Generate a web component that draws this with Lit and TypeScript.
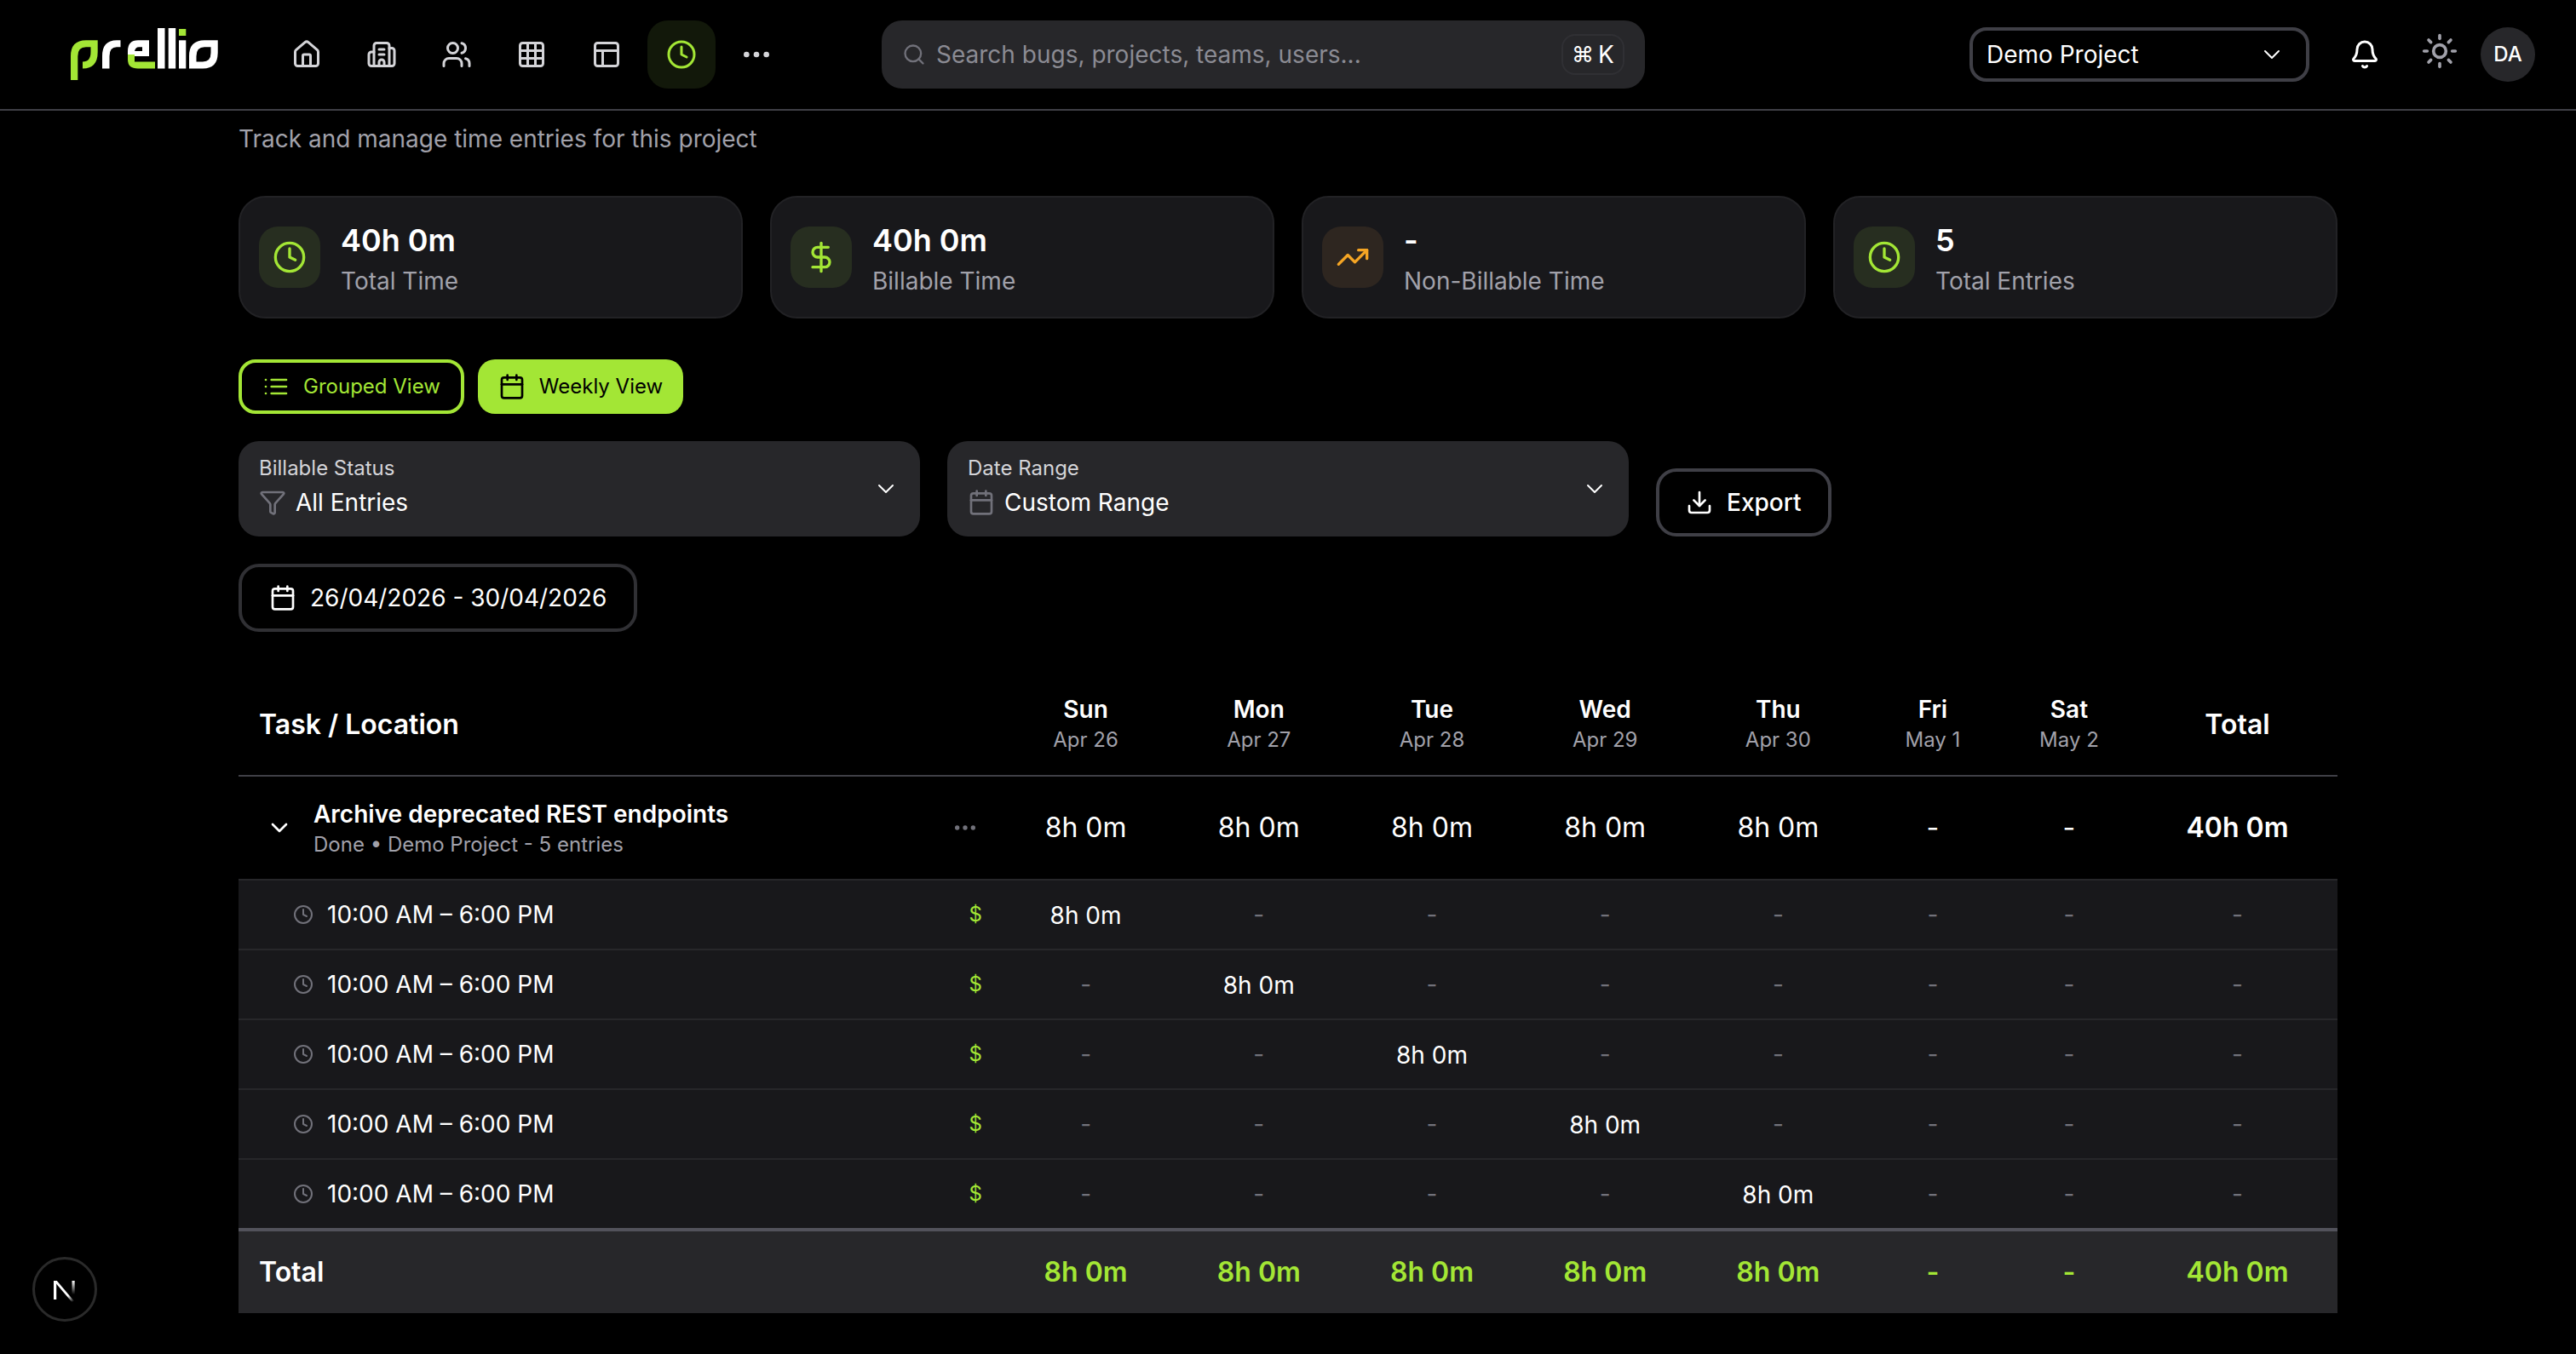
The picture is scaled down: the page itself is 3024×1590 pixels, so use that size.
import { LitElement, html, css, svg } from "lit";
import { customElement } from "lit/decorators.js";

const I: Record<string, any> = {
  house: svg`<path d="M15 21v-8a1 1 0 0 0-1-1h-4a1 1 0 0 0-1 1v8"/><path d="M3 10a2 2 0 0 1 .709-1.528l7-5.999a2 2 0 0 1 2.582 0l7 5.999A2 2 0 0 1 21 10v9a2 2 0 0 1-2 2H5a2 2 0 0 1-2-2z"/>`,
  building: svg`<path d="M10 12h4"/><path d="M10 8h4"/><path d="M14 21v-3a2 2 0 0 0-4 0v3"/><path d="M6 10H4a2 2 0 0 0-2 2v7a2 2 0 0 0 2 2h16a2 2 0 0 0 2-2V9a2 2 0 0 0-2-2h-2"/><path d="M6 21V5a2 2 0 0 1 2-2h8a2 2 0 0 1 2 2v16"/>`,
  users: svg`<path d="M16 21v-2a4 4 0 0 0-4-4H6a4 4 0 0 0-4 4v2"/><circle cx="9" cy="7" r="4"/><path d="M22 21v-2a4 4 0 0 0-3-3.87"/><path d="M16 3.13a4 4 0 0 1 0 7.75"/>`,
  grid: svg`<rect x="3" y="3" width="18" height="18" rx="2"/><path d="M3 9h18"/><path d="M3 15h18"/><path d="M9 3v18"/><path d="M15 3v18"/>`,
  panels: svg`<rect x="3" y="3" width="18" height="18" rx="2"/><path d="M3 9h18"/><path d="M9 21V9"/>`,
  clock: svg`<circle cx="12" cy="12" r="10"/><path d="M12 6v6l4 2"/>`,
  dots: svg`<circle cx="12" cy="12" r="1"/><circle cx="19" cy="12" r="1"/><circle cx="5" cy="12" r="1"/>`,
  search: svg`<path d="m21 21-4.34-4.34"/><circle cx="11" cy="11" r="8"/>`,
  chevron: svg`<path d="m6 9 6 6 6-6"/>`,
  bell: svg`<path d="M10.268 21a2 2 0 0 0 3.464 0"/><path d="M3.262 15.326A1 1 0 0 0 4 17h16a1 1 0 0 0 .74-1.673C19.41 13.956 18 12.499 18 8A6 6 0 0 0 6 8c0 4.499-1.411 5.956-2.738 7.326"/>`,
  sun: svg`<circle cx="12" cy="12" r="4"/><path d="M12 2v2"/><path d="M12 20v2"/><path d="m4.93 4.93 1.41 1.41"/><path d="m17.66 17.66 1.41 1.41"/><path d="M2 12h2"/><path d="M20 12h2"/><path d="m6.34 17.66-1.41 1.41"/><path d="m19.07 4.93-1.41 1.41"/>`,
  dollar: svg`<path d="M12 2v20"/><path d="M17 5H9.5a3.5 3.5 0 0 0 0 7h5a3.5 3.5 0 0 1 0 7H6"/>`,
  trend: svg`<path d="M16 7h6v6"/><path d="m22 7-8.5 8.5-5-5L2 17"/>`,
  list: svg`<path d="M3 12h.01"/><path d="M3 18h.01"/><path d="M3 6h.01"/><path d="M8 12h13"/><path d="M8 18h13"/><path d="M8 6h13"/>`,
  calendar: svg`<path d="M8 2v4"/><path d="M16 2v4"/><rect x="3" y="4" width="18" height="18" rx="2"/><path d="M3 10h18"/>`,
  funnel: svg`<path d="M10 20a1 1 0 0 0 .553.895l2 1A1 1 0 0 0 14 21v-7a2 2 0 0 1 .517-1.341L21.74 4.67A1 1 0 0 0 21 3H3a1 1 0 0 0-.742 1.67l7.225 7.989A2 2 0 0 1 10 14z"/>`,
  download: svg`<path d="M12 15V3"/><path d="M21 15v4a2 2 0 0 1-2 2H5a2 2 0 0 1-2-2v-4"/><path d="m7 10 5 5 5-5"/>`,
};

const icon = (name: string, size: number, sw = 2) =>
  html`<svg class="ic" width=${size} height=${size} viewBox="0 0 24 24" fill="none" stroke="currentColor" stroke-width=${sw} stroke-linecap="round" stroke-linejoin="round">${I[name]}</svg>`;

const logo = html`<svg class="logo" width="180" height="68" viewBox="80 30 180 68">
  <path fill="#a3e635" d="M83 94V66Q83 47.3 101 47.3H114.7V61Q114.7 80.5 97 80.5V72.5Q106.5 72.5 106.5 61V55.3H101Q91.3 55.3 91.3 66V94Z"/>
  <path fill="#fff" d="M120 80.5V66Q120 47.3 137 47.3H141.5V55.3H137Q128.5 55.3 128.5 66V80.5Z"/>
  <path fill="#fff" fill-rule="evenodd" d="M150 60Q150 47.3 162 47.3H175V66H150ZM158 60H167V55.3H163Q159 55.3 158 60Z"/>
  <path fill="#a3e635" d="M150 64H158V72.5H182V80.5H162Q150 80.5 150 70Z"/>
  <rect fill="#fff" x="185" y="33" width="8.5" height="47.5"/>
  <rect fill="#fff" x="197.7" y="33" width="8.5" height="47.5"/>
  <rect fill="#a3e635" x="210" y="34" width="8.3" height="8"/>
  <rect fill="#fff" x="210" y="47.3" width="8.3" height="33.2"/>
  <path fill="#fff" fill-rule="evenodd" d="M222 66Q222 47.3 240 47.3H255.7V62Q255.7 80.5 238 80.5H222ZM230.5 72.5H238Q247.5 72.5 247.5 62V55.3H240Q230.5 55.3 230.5 66Z"/>
</svg>`;

const nextMark = html`<svg width="40" height="40" viewBox="0 0 40 40" fill="none">
  <defs>
    <linearGradient id="nd" x1="10" y1="10" x2="31" y2="34" gradientUnits="userSpaceOnUse"><stop offset="0.7" stop-color="#fff"/><stop offset="1" stop-color="#fff" stop-opacity="0"/></linearGradient>
    <linearGradient id="nv" x1="30" y1="10" x2="30" y2="26" gradientUnits="userSpaceOnUse"><stop stop-color="#fff"/><stop offset="1" stop-color="#fff" stop-opacity="0"/></linearGradient>
  </defs>
  <rect x="7" y="10" width="3.2" height="22" fill="#fff"/>
  <path d="M7 10H10.8L31.5 34.5H28Z" fill="url(#nd)"/>
  <rect x="28.5" y="10" width="3.2" height="16" fill="url(#nv)"/>
</svg>`;

const NAV = ["house", "building", "users", "grid", "panels", "clock"];
const CARDS = [
  { v: "40h 0m", l: "Total Time", i: "clock", amber: false },
  { v: "40h 0m", l: "Billable Time", i: "dollar", amber: false },
  { v: "-", l: "Non-Billable Time", i: "trend", amber: true },
  { v: "5", l: "Total Entries", i: "clock", amber: false },
];
const DAYS = [
  ["Sun", "Apr 26"], ["Mon", "Apr 27"], ["Tue", "Apr 28"], ["Wed", "Apr 29"],
  ["Thu", "Apr 30"], ["Fri", "May 1"], ["Sat", "May 2"],
];
const TOTALS = ["8h 0m", "8h 0m", "8h 0m", "8h 0m", "8h 0m", "-", "-", "40h 0m"];

@customElement("app-root")
export class AppRoot extends LitElement {
  static styles = css`
    :host { display: block; height: 100vh; overflow: hidden; background: #000; color: #fff; font-family: Inter, "Liberation Sans", sans-serif; font-size: 28px; line-height: 40px; position: relative; }
    * { box-sizing: border-box; }
    .ic, .logo { display: block; flex: none; }

    header { height: 130px; border-bottom: 2px solid #3f3f46; display: flex; align-items: center; padding: 0 48px 0 80px; }
    .nav { display: flex; gap: 8px; margin-left: 60px; }
    .nav-btn { width: 80px; height: 80px; border-radius: 24px; display: flex; align-items: center; justify-content: center; color: #d4d4d8; }
    .nav-btn.on { background: #12180a; color: #a3e635; }
    .search { width: 896px; height: 80px; margin-left: 107px; border-radius: 24px; background: #27272a; display: flex; align-items: center; padding: 0 24px; color: #71717a; }
    .search span { margin-left: 12px; color: #8b8b93; flex: 1; }
    .kbd { width: 74px; height: 48px; border: 2px solid #303034; border-radius: 16px; color: #fff; display: flex; align-items: center; justify-content: center; font-size: 28px; gap: 5px; flex: none; }
    .kbd-sym { font-size: 26px; font-style: normal; }
    .right { margin-left: auto; display: flex; align-items: center; gap: 8px; }
    .project { width: 399px; height: 64px; border: 4px solid #3f3f46; border-radius: 20px; display: flex; align-items: center; justify-content: space-between; padding: 0 24px 0 16px; margin-right: 17px; }
    .ghost { width: 80px; height: 80px; display: flex; align-items: center; justify-content: center; }
    .sun { color: #a1a1aa; padding-bottom: 8px; }
    .avatar { width: 64px; height: 64px; border-radius: 50%; background: #27272a; display: flex; align-items: center; justify-content: center; font-size: 24px; font-weight: 500; }

    main { width: 2464px; margin: 0 auto; padding-top: 13px; }
    .sub { color: #a1a1aa; }
    .cards { display: grid; grid-template-columns: repeat(4, 1fr); gap: 32px; margin-top: 47px; }
    .card { height: 144px; border-radius: 32px; background: #18181b; border: 2px solid #222225; padding: 0 22px; display: flex; align-items: center; gap: 24px; }
    .card-ic { width: 72px; height: 72px; border-radius: 22px; background: #272e20; color: #a3e635; display: flex; align-items: center; justify-content: center; }
    .card-ic.amber { background: #2e2620; color: #f5a524; }
    .card-text { padding-top: 4px; }
    .val { font-size: 36px; line-height: 48px; font-weight: 600; }
    .lab { color: #a1a1aa; margin-top: 4px; }

    .views { display: flex; gap: 16px; margin-top: 48px; }
    .view { height: 64px; border-radius: 20px; border: 4px solid #a3e635; padding: 0 24px; display: flex; align-items: center; gap: 16px; color: #a3e635; font-size: 24px; font-weight: 400; }
    .view.on { background: #a3e635; color: #000; border: 0; }

    .filters { display: flex; align-items: flex-end; gap: 32px; margin-top: 32px; }
    .select { width: 800px; height: 112px; border-radius: 24px; background: #27272a; padding: 0 24px; display: flex; align-items: center; justify-content: space-between; }
    .s-text { padding-bottom: 4px; }
    .s-lab { font-size: 24px; line-height: 32px; color: #d4d4d8; }
    .s-val { display: flex; align-items: center; gap: 11px; margin-top: 4px; color: #71717a; }
    .s-val span { color: #fff; }
    .outline { height: 80px; border: 4px solid #3f3f46; border-radius: 24px; display: flex; align-items: center; gap: 16px; font-weight: 500; padding: 0 31px; white-space: nowrap; }
    .outline.date { width: 468px; border-color: #303034; margin-top: 32px; padding: 0 0 0 32px; font-weight: 400; }

    .table { margin-top: 48px; }
    .row { display: grid; grid-template-columns: 893px repeat(5, 203.2px) 160px 160px 1fr; align-items: center; text-align: center; }
    .first { text-align: left; display: flex; align-items: center; }
    .head { height: 122px; border-bottom: 2px solid #3f3f46; font-weight: 600; padding-top: 2px; }
    .head .first, .foot .first { padding-left: 24px; font-size: 32px; }
    .head .big { font-size: 32px; }
    .day { font-size: 28px; line-height: 36px; }
    .date-s { font-size: 24px; line-height: 36px; font-weight: 400; color: #a1a1aa; }
    .group { height: 122px; border-bottom: 2px solid #27272a; font-size: 32px; }
    .group .first { padding: 0 24px 0 32px; gap: 24px; }
    .g-main { flex: 1; padding-top: 2px; }
    .g-title { font-size: 28px; line-height: 36px; font-weight: 600; }
    .g-sub { font-size: 24px; line-height: 32px; margin-top: 2px; font-weight: 400; color: #a1a1aa; }
    .muted { color: #71717a; }
    .strong { font-weight: 600; }
    .entry { height: 82px; background: #18181b; border-bottom: 2px solid #27272a; }
    .entry.last { height: 80px; border-bottom: 0; }
    .entry .first { padding: 0 20px 0 64px; gap: 16px; }
    .entry .time { flex: 1; }
    .entry .dollar { font-size: 24px; color: #a3e635; }
    .cell { padding-top: 2px; }
    .dash { color: #71717a; }
    .foot { height: 100px; background: #27272a; border-top: 4px solid #52525b; font-size: 32px; font-weight: 600; color: #a3e635; }
    .foot .first { color: #fff; }

    .next { position: absolute; left: 38px; bottom: 38px; width: 76px; height: 76px; border-radius: 50%; background: #000; border: 3px solid #2a2a2a; display: flex; align-items: center; justify-content: center; }
  `;

  render() {
    return html`
      <header>
        ${logo}
        <nav class="nav">
          ${NAV.map((n) => html`<div class="nav-btn ${n === "clock" ? "on" : ""}">${icon(n, 36)}</div>`)}
          <div class="nav-btn">${icon("dots", 40)}</div>
        </nav>
        <div class="search">
          ${icon("search", 28)}
          <span>Search bugs, projects, teams, users...</span>
          <div class="kbd"><i class="kbd-sym">⌘</i>K</div>
        </div>
        <div class="right">
          <div class="project">Demo Project ${icon("chevron", 32, 1.5)}</div>
          <div class="ghost">${icon("bell", 36)}</div>
          <div class="ghost sun">${icon("sun", 44)}</div>
          <div class="avatar">DA</div>
        </div>
      </header>
      <main>
        <div class="sub">Track and manage time entries for this project</div>
        <div class="cards">
          ${CARDS.map((c) => html`
            <div class="card">
              <div class="card-ic ${c.amber ? "amber" : ""}">${icon(c.i, 40)}</div>
              <div class="card-text"><div class="val">${c.v}</div><div class="lab">${c.l}</div></div>
            </div>`)}
        </div>
        <div class="views">
          <div class="view">${icon("list", 32)}Grouped View</div>
          <div class="view on">${icon("calendar", 32)}Weekly View</div>
        </div>
        <div class="filters">
          <div class="select">
            <div class="s-text"><div class="s-lab">Billable Status</div><div class="s-val">${icon("funnel", 32)}<span>All Entries</span></div></div>
            ${icon("chevron", 32, 1.5)}
          </div>
          <div class="select">
            <div class="s-text"><div class="s-lab">Date Range</div><div class="s-val">${icon("calendar", 32)}<span>Custom Range</span></div></div>
            ${icon("chevron", 32, 1.5)}
          </div>
          <div class="outline">${icon("download", 32)}Export</div>
        </div>
        <div class="outline date">${icon("calendar", 32)}26/04/2026 - 30/04/2026</div>
        <div class="table">
          <div class="row head">
            <div class="first">Task / Location</div>
            ${DAYS.map((d) => html`<div><div class="day">${d[0]}</div><div class="date-s">${d[1]}</div></div>`)}
            <div class="big">Total</div>
          </div>
          <div class="row group">
            <div class="first">
              ${icon("chevron", 32)}
              <div class="g-main">
                <div class="g-title">Archive deprecated REST endpoints</div>
                <div class="g-sub">Done • Demo Project - 5 entries</div>
              </div>
              <span class="muted">${icon("dots", 32)}</span>
            </div>
            ${TOTALS.map((t, i) => html`<div class=${i === 7 ? "strong" : ""}>${t}</div>`)}
          </div>
          ${[0, 1, 2, 3, 4].map((r) => html`
            <div class="row entry ${r === 4 ? "last" : ""}">
              <div class="first">
                <span class="muted">${icon("clock", 24)}</span>
                <span class="time">10:00 AM – 6:00 PM</span>
                <span class="dollar">$</span>
              </div>
              ${[0, 1, 2, 3, 4, 5, 6, 7].map((c) => (c === r ? html`<div class="cell">8h 0m</div>` : html`<div class="dash">-</div>`))}
            </div>`)}
          <div class="row foot">
            <div class="first">Total</div>
            ${TOTALS.map((t) => html`<div>${t}</div>`)}
          </div>
        </div>
      </main>
      <div class="next">${nextMark}</div>
    `;
  }
}
